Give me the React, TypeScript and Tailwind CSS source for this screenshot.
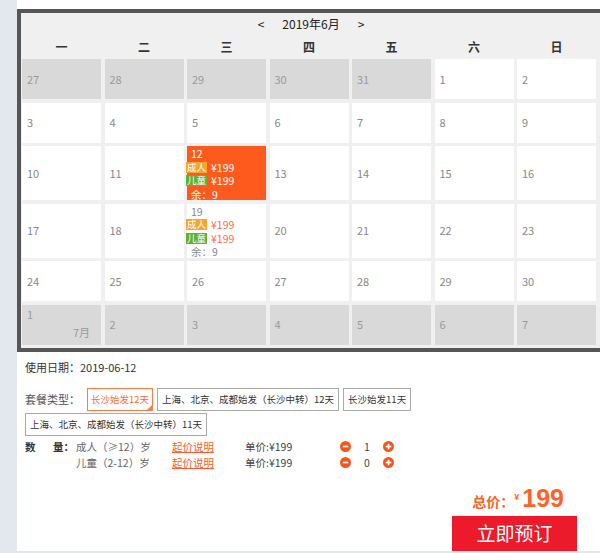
const weekdays = ["一", "二", "三", "四", "五", "六", "日"]

type Day = {
  n: number
  muted?: boolean
  selected?: boolean
  avail?: boolean
  month?: string
}

const rows: { h: string; days: Day[] }[] = [
  {
    h: "h-[40px]",
    days: [
      { n: 27, muted: true },
      { n: 28, muted: true },
      { n: 29, muted: true },
      { n: 30, muted: true },
      { n: 31, muted: true },
      { n: 1 },
      { n: 2 },
    ],
  },
  { h: "h-[40px]", days: [3, 4, 5, 6, 7, 8, 9].map((n) => ({ n })) },
  {
    h: "h-[54px]",
    days: [10, 11, 12, 13, 14, 15, 16].map((n) => ({ n, selected: n === 12 })),
  },
  {
    h: "h-[54px]",
    days: [17, 18, 19, 20, 21, 22, 23].map((n) => ({ n, avail: n === 19 })),
  },
  { h: "h-[40px]", days: [24, 25, 26, 27, 28, 29, 30].map((n) => ({ n })) },
  {
    h: "h-[40px]",
    days: [1, 2, 3, 4, 5, 6, 7].map((n) => ({ n, muted: true, month: n === 1 ? "7月" : undefined })),
  },
]

function PriceCell({ day, selected }: { day: number; selected?: boolean }) {
  const price = selected ? "text-white" : "text-[#ff6a3d]"
  const muted = selected ? "text-white" : "text-[#888]"
  return (
    <div className="flex flex-col pt-[1px] text-[10.5px]">
      <span className={`h-[13.5px] pl-[4px] leading-[13.5px] ${muted}`}>{day}</span>
      <div className="flex h-[13.5px] items-center gap-[4px]">
        <span className="-ml-[1px] bg-[#f7a531] px-[1px] text-[9.5px] leading-[11px] text-white">{"成人"}</span>
        <span className={`leading-[13.5px] ${price}`}>{"¥199"}</span>
      </div>
      <div className="flex h-[13.5px] items-center gap-[4px]">
        <span className="-ml-[1px] bg-[#5bb234] px-[1px] text-[9.5px] leading-[11px] text-white">{"儿童"}</span>
        <span className={`leading-[13.5px] ${price}`}>{"¥199"}</span>
      </div>
      <span className={`h-[13.5px] pl-[4px] leading-[13.5px] ${muted}`}>{"余：9"}</span>
    </div>
  )
}

function Cell({ d, h }: { d: Day; h: string }) {
  if (d.selected || d.avail) {
    return (
      <div className={`${h} ${d.selected ? "bg-[#ff5a1e]" : "bg-white"}`}>
        <PriceCell day={d.n} selected={d.selected} />
      </div>
    )
  }
  if (d.month) {
    return (
      <div className={`${h} flex flex-col bg-[#d9d9d9] px-[5px] pt-[2px] text-[11px] leading-[14px] text-[#999]`}>
        <span>{d.n}</span>
        <span className="mt-[4px] self-end pr-[6px]">{d.month}</span>
      </div>
    )
  }
  return (
    <div
      className={`${h} flex items-center px-[5px] text-[11px] ${
        d.muted ? "bg-[#d9d9d9] text-[#999]" : "bg-white text-[#888]"
      }`}
    >
      {d.n}
    </div>
  )
}

function Calendar() {
  return (
    <div className="mt-[9px] w-[588px] shrink-0 border-[4px] border-[#565656] bg-[#f0f0f0] px-[1px] pb-[3px]">
      <div className="flex h-[22px] items-center justify-center gap-[18px] text-[12px] text-[#222]">
        <span>{"<"}</span>
        <span>{"2019年6月"}</span>
        <span>{">"}</span>
      </div>
      <div className="grid h-[24px] grid-cols-[repeat(7,79px)] items-center gap-x-[3.5px] text-[12px] font-bold text-[#333]">
        {weekdays.map((w) => (
          <span key={w} className="text-center">
            {w}
          </span>
        ))}
      </div>
      <div className="grid grid-cols-[repeat(7,79px)] gap-[3.5px]">
        {rows.map((r, i) => r.days.map((d, j) => <Cell key={`${i}-${j}`} d={d} h={r.h} />))}
      </div>
    </div>
  )
}

function RoundBtn({ plus }: { plus?: boolean }) {
  return (
    <svg width="11" height="11" viewBox="0 0 12 12">
      <circle cx="6" cy="6" r="6" fill="#f2571b" />
      <path d="M3 6h6" stroke="#fff" strokeWidth="1.8" />
      {plus && <path d="M6 3v6" stroke="#fff" strokeWidth="1.8" />}
    </svg>
  )
}

function QtyRow({ label, name, count }: { label?: boolean; name: string; count: number }) {
  return (
    <div className="flex h-[16px] items-center text-[10.5px] text-[#666]">
      <div className="flex w-[51px] justify-between pr-[2px] font-bold text-[#333]">
        {label && (
          <>
            <span>{"数"}</span>
            <span>{"量："}</span>
          </>
        )}
      </div>
      <span className="w-[96px]">{name}</span>
      <span className="w-[73px] text-[#ff5a2a] underline">{"起价说明"}</span>
      <span className="w-[95px] text-[#444]">{"单价:¥199"}</span>
      <RoundBtn />
      <span className="w-[32px] text-center text-[#444]">{count}</span>
      <RoundBtn plus />
    </div>
  )
}

export default function App() {
  const pkgs = ["上海、北京、成都始发（长沙中转）12天", "长沙始发11天", "上海、北京、成都始发（长沙中转）11天"]
  return (
    <div className="flex h-[553px] w-[600px] bg-[#e2e8ee] pl-[17px] font-['Microsoft_YaHei','Noto_Sans_CJK_SC',sans-serif]">
      <div className="flex h-[551px] flex-1 flex-col overflow-hidden bg-white">
        <Calendar />
        <div className="px-[8px]">
          <p className="mt-[7px] text-[11px] leading-[16px] text-[#333]">{"使用日期：2019-06-12"}</p>
          <div className="mt-[13px] flex flex-wrap items-center gap-x-[4px] gap-y-[2px]">
            <span className="w-[58px] whitespace-nowrap text-[11px] text-[#555]">{"套餐类型："}</span>
            <span className="relative flex h-[23px] items-center whitespace-nowrap border border-[#ff7a45] px-[3px] text-[9.5px] text-[#ff6a2b]">
              {"长沙始发12天"}
              <span className="absolute bottom-0 right-0 h-0 w-0 border-b-[5px] border-l-[5px] border-b-[#ff7a45] border-l-transparent" />
            </span>
            {pkgs.map((p) => (
              <span
                key={p}
                className="flex h-[23px] items-center whitespace-nowrap border border-[#aaa] px-[4px] text-[9.5px] text-[#333]"
              >
                {p}
              </span>
            ))}
          </div>
          <div className="mt-[3px]">
            <QtyRow label name="成人（≥12）岁" count={1} />
            <QtyRow name="儿童（2-12）岁" count={0} />
          </div>
        </div>
        <div className="mt-auto flex flex-col items-end pr-[23px]">
          <div className="mr-[13px] flex items-baseline font-['Liberation_Sans','Noto_Sans_CJK_SC',sans-serif] font-bold text-[#ff6227]">
            <span className="text-[14px]">{"总价："}</span>
            <span className="relative -top-[7px] text-[9px]">{"¥"}</span>
            <span className="ml-[3px] text-[25px] leading-[28px]">{"199"}</span>
          </div>
          <button className="mt-[3px] flex h-[35px] w-[125px] items-center justify-center bg-[#ec1a2a] text-[19px] text-white">
            {"立即预订"}
          </button>
        </div>
      </div>
    </div>
  )
}
